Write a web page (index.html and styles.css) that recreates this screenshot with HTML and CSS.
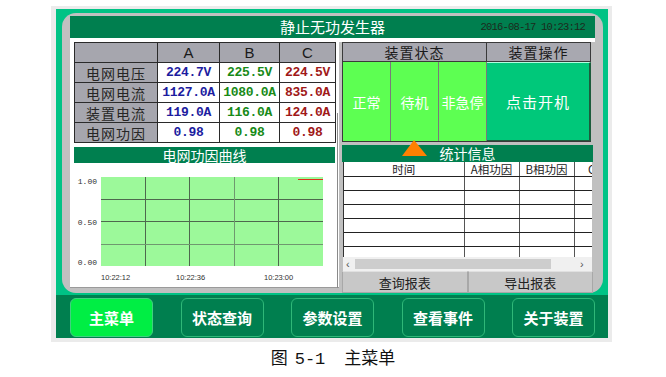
FILE: index.html
```html
<!DOCTYPE html>
<html lang="zh">
  <head>
    <meta charset="UTF-8" />
    <meta name="viewport" content="width=device-width, initial-scale=1.0" />
    <title>静止无功发生器 - 主菜单</title>
    <link rel="stylesheet" href="styles.css">
  </head>
  <body>
    <div class="frame">
      <div class="screen">
        <div class="panel">
          <div class="topbar">
            <span class="title">静止无功发生器</span>
            <span class="clock">2016-08-17 10:23:12</span>
          </div>

          <div class="content">
            <!-- left: grid values + power factor curve -->
            <div class="left">
              <table class="grid">
                <colgroup>
                  <col style="width: 83px" />
                  <col style="width: 62px" />
                  <col style="width: 60px" />
                  <col style="width: 56px" />
                </colgroup>
                <tr>
                  <th></th>
                  <th class="phase">A</th>
                  <th class="phase">B</th>
                  <th class="phase">C</th>
                </tr>
                <tr>
                  <th>电网电压</th>
                  <td class="a">224.7V</td>
                  <td class="b">225.5V</td>
                  <td class="c">224.5V</td>
                </tr>
                <tr>
                  <th>电网电流</th>
                  <td class="a">1127.0A</td>
                  <td class="b">1080.0A</td>
                  <td class="c">835.0A</td>
                </tr>
                <tr>
                  <th>装置电流</th>
                  <td class="a">119.0A</td>
                  <td class="b">116.0A</td>
                  <td class="c">124.0A</td>
                </tr>
                <tr>
                  <th>电网功因</th>
                  <td class="a">0.98</td>
                  <td class="b">0.98</td>
                  <td class="c">0.98</td>
                </tr>
              </table>

              <div class="bar">电网功因曲线</div>

              <svg class="chart" width="261" height="125" viewBox="0 0 261 125">
                <rect x="27" y="14" width="222" height="89" fill="#9cf99a" />
                <g stroke="#4e684e" stroke-width="1">
                  <line x1="71.5" y1="14" x2="71.5" y2="103" />
                  <line x1="115.5" y1="14" x2="115.5" y2="103" />
                  <line x1="204.5" y1="14" x2="204.5" y2="103" />
                  <line x1="27" y1="36.5" x2="249" y2="36.5" />
                  <line x1="27" y1="58.5" x2="249" y2="58.5" />
                </g>
                <g stroke="#6f986f" stroke-width="1">
                  <line x1="160.5" y1="14" x2="160.5" y2="103" />
                  <line x1="27" y1="81.5" x2="249" y2="81.5" />
                </g>
                <line x1="224" y1="16.5" x2="249" y2="16.5" stroke="#e0301c" />
                <g class="axis-y" text-anchor="end">
                  <text x="23" y="21">1.00</text>
                  <text x="23" y="62">0.50</text>
                  <text x="23" y="102">0.00</text>
                </g>
                <g class="axis-x">
                  <text x="27" y="117">10:22:12</text>
                  <text x="102" y="117">10:22:36</text>
                  <text x="190" y="117">10:23:00</text>
                </g>
              </svg>

              <div class="scroll-line"></div>
            </div>

            <!-- right: device state + statistics -->
            <div class="right">
              <div class="device">
                <div class="dev-head">
                  <div class="dh dh-status">装置状态</div>
                  <div class="dh dh-op">装置操作</div>
                </div>
                <div class="dev-body">
                  <div class="st">正常</div>
                  <div class="st">待机</div>
                  <div class="st">非急停</div>
                  <div class="start">点击开机</div>
                </div>
              </div>

              <div class="bar stats-bar">统计信息<span class="arrow"></span></div>

              <div class="stats">
                <table>
                  <colgroup>
                    <col style="width: 120px" />
                    <col style="width: 55px" />
                    <col style="width: 55px" />
                    <col style="width: 70px" />
                  </colgroup>
                  <tr>
                    <th>时间</th>
                    <th>A相功因</th>
                    <th>B相功因</th>
                    <th>C相功因</th>
                  </tr>
                  <tr><td></td><td></td><td></td><td></td></tr>
                  <tr><td></td><td></td><td></td><td></td></tr>
                  <tr><td></td><td></td><td></td><td></td></tr>
                  <tr><td></td><td></td><td></td><td></td></tr>
                  <tr><td></td><td></td><td></td><td></td></tr>
                  <tr><td></td><td></td><td></td><td></td></tr>
                </table>
              </div>

              <div class="hscroll">
                <span class="arr">&lsaquo;</span>
                <span class="thumb"></span>
                <span class="fill"></span>
                <span class="arr">&rsaquo;</span>
              </div>

              <div class="reports">
                <button>查询报表</button>
                <button>导出报表</button>
              </div>
            </div>
          </div>
        </div>

        <div class="nav">
          <button class="active">主菜单</button>
          <button>状态查询</button>
          <button>参数设置</button>
          <button>查看事件</button>
          <button>关于装置</button>
        </div>
      </div>
    </div>

    <p class="caption">图<span class="num">5-1</span>主菜单</p>
  </body>
</html>
```

FILE: styles.css
```css
* {
  box-sizing: border-box;
}

body {
  margin: 0;
  background: #fff;
  font-family: "Noto Sans CJK SC", sans-serif;
}

.frame {
  width: 561px;
  height: 336px;
  margin: 6px 0 0 51px;
  padding: 3px 4px 4px 5px;
  background: #ebebeb;
}

.screen {
  height: 329px;
  padding-top: 4px;
  background: #00c385;
  display: flex;
  flex-direction: column;
}

.panel {
  height: 280px;
  margin: 0 5px 0 6px;
  padding: 3px 8px 0;
  background: #c0c0c0;
  border-radius: 14px;
}

.topbar {
  height: 22px;
  background: #007f4f;
  display: grid;
  grid-template-columns: 1fr auto 1fr;
  align-items: center;
}

.title {
  grid-column: 2;
  color: #fff;
  font-size: 15px;
  line-height: 22px;
}

.clock {
  justify-self: end;
  padding-right: 10px;
  font-family: "Liberation Mono", monospace;
  font-size: 10.5px;
  letter-spacing: -0.8px;
  color: #1c2a1c;
}

.content {
  display: flex;
  gap: 3px;
  border-top: 4px solid #fff;
}

/* left pane */
.left {
  position: relative;
  width: 269px;
  height: 246px;
  padding: 0 4px;
  background: #fff;
  border-bottom: 1px solid #9a9a9a;
}

.grid {
  width: 261px;
  border-collapse: collapse;
  table-layout: fixed;
}

.grid th,
.grid td {
  height: 20px;
  padding: 0;
  border: 1px solid #2a2a2a;
  line-height: 18px;
  text-align: center;
}

.grid th {
  background: #a6a6ae;
  font-weight: normal;
  font-size: 14px;
  letter-spacing: 1px;
  color: #262626;
}

.grid th.phase {
  font-family: "Liberation Sans", sans-serif;
  font-size: 15px;
  letter-spacing: 0;
  color: #1a1a1a;
}

.grid td {
  font-family: "Liberation Mono", monospace;
  font-weight: bold;
  font-size: 13px;
  letter-spacing: -0.3px;
}

.a {
  color: #1c1ca0;
}

.b {
  color: #178a17;
}

.c {
  color: #a01818;
}

.bar {
  height: 16px;
  margin-top: 4px;
  background: #007f4f;
  color: #fff;
  font-size: 14px;
  line-height: 16px;
  text-align: center;
}

.chart {
  display: block;
}

.axis-y {
  font-family: "Liberation Mono", monospace;
  font-size: 8px;
  fill: #303030;
}

.axis-x {
  font-family: "Liberation Sans", sans-serif;
  font-size: 7.5px;
  fill: #303030;
}

.scroll-line {
  position: absolute;
  right: 1px;
  top: 71px;
  width: 1px;
  height: 175px;
  background: #8a8a8a;
}

/* right pane */
.right {
  width: 251px;
  display: flex;
  flex-direction: column;
}

.device {
  width: 249px;
}

.dev-head {
  display: flex;
  height: 20px;
  border: 1px solid #3a3a3a;
  background: #a8a8b0;
}

.dh {
  font-size: 14px;
  line-height: 18px;
  letter-spacing: 1px;
  text-align: center;
  color: #1a1a1a;
}

.dh-status {
  width: 144px;
  border-right: 1px solid #3a3a3a;
}

.dh-op {
  flex: 1;
}

.dev-body {
  display: flex;
  height: 80px;
  border-left: 1px solid #3a3a3a;
  border-bottom: 1px solid #3a3a3a;
}

.st {
  width: 48px;
  background: #5dff52;
  border-right: 1px solid #7a7a7a;
  color: #fff;
  font-size: 14px;
  display: flex;
  align-items: center;
  justify-content: center;
}

.start {
  flex: 1;
  background: #00c87a;
  border-top: 1px solid #b0ffe0;
  border-right: 2px solid #1d5c3c;
  border-bottom: 1px solid #1d5c3c;
  color: #fff;
  font-size: 15px;
  letter-spacing: 1px;
  display: flex;
  align-items: center;
  justify-content: center;
}

.stats-bar {
  position: relative;
  height: 17px;
  margin-top: 3px;
  line-height: 17px;
}

.arrow {
  position: absolute;
  left: 60px;
  top: -5px;
  width: 0;
  height: 0;
  border-left: 12px solid transparent;
  border-right: 13px solid transparent;
  border-bottom: 16px solid #ff8000;
}

.stats {
  height: 95px;
  margin: 0 1px;
  background: #fff;
  border-left: 1px solid #333;
  overflow: hidden;
}

.stats table {
  width: 300px;
  border-collapse: collapse;
  table-layout: fixed;
}

.stats th,
.stats td {
  height: 14px;
  padding: 0;
  border-bottom: 1px solid #222;
  border-right: 1px solid #555;
}

.stats th {
  font-weight: normal;
  font-size: 11.5px;
  line-height: 14px;
  color: #222;
  white-space: nowrap;
}

.hscroll {
  height: 14px;
  margin: 0 1px;
  padding: 0 3px;
  background: #f0f0f0;
  display: flex;
  align-items: center;
  font-family: "Liberation Sans", sans-serif;
  font-size: 11px;
  color: #555;
}

.arr {
  width: 9px;
}

.thumb {
  width: 196px;
  height: 10px;
  background: #cdcdcd;
}

.fill {
  flex: 1;
}

.reports {
  display: flex;
  height: 22px;
}

.reports button {
  flex: 1;
  padding: 0;
  background: #c8c8c8;
  border: 1px solid #a8a8a8;
  border-top-color: #e0e0e0;
  font-family: "Noto Sans CJK SC", sans-serif;
  font-size: 13px;
  color: #222;
}

/* bottom menu */
.nav {
  height: 43px;
  margin-top: 2px;
  padding: 3px 13px 1px 14px;
  background: #007f4f;
  display: flex;
  justify-content: space-between;
}

.nav button {
  width: 83px;
  height: 39px;
  padding: 0;
  background: #007f4f;
  border: 1px solid #2fb878;
  border-radius: 6px;
  color: #fff;
  font-family: "Noto Sans CJK SC", sans-serif;
  font-weight: bold;
  font-size: 15px;
}

.nav button.active {
  background: #00ee44;
  border-color: #40d080;
}

.caption {
  margin: 5px 0 0;
  font-size: 17px;
  line-height: 20px;
  text-align: center;
  color: #111;
}

.caption .num {
  margin: 0 19px 0 7px;
  font-family: "Liberation Mono", monospace;
}
```
